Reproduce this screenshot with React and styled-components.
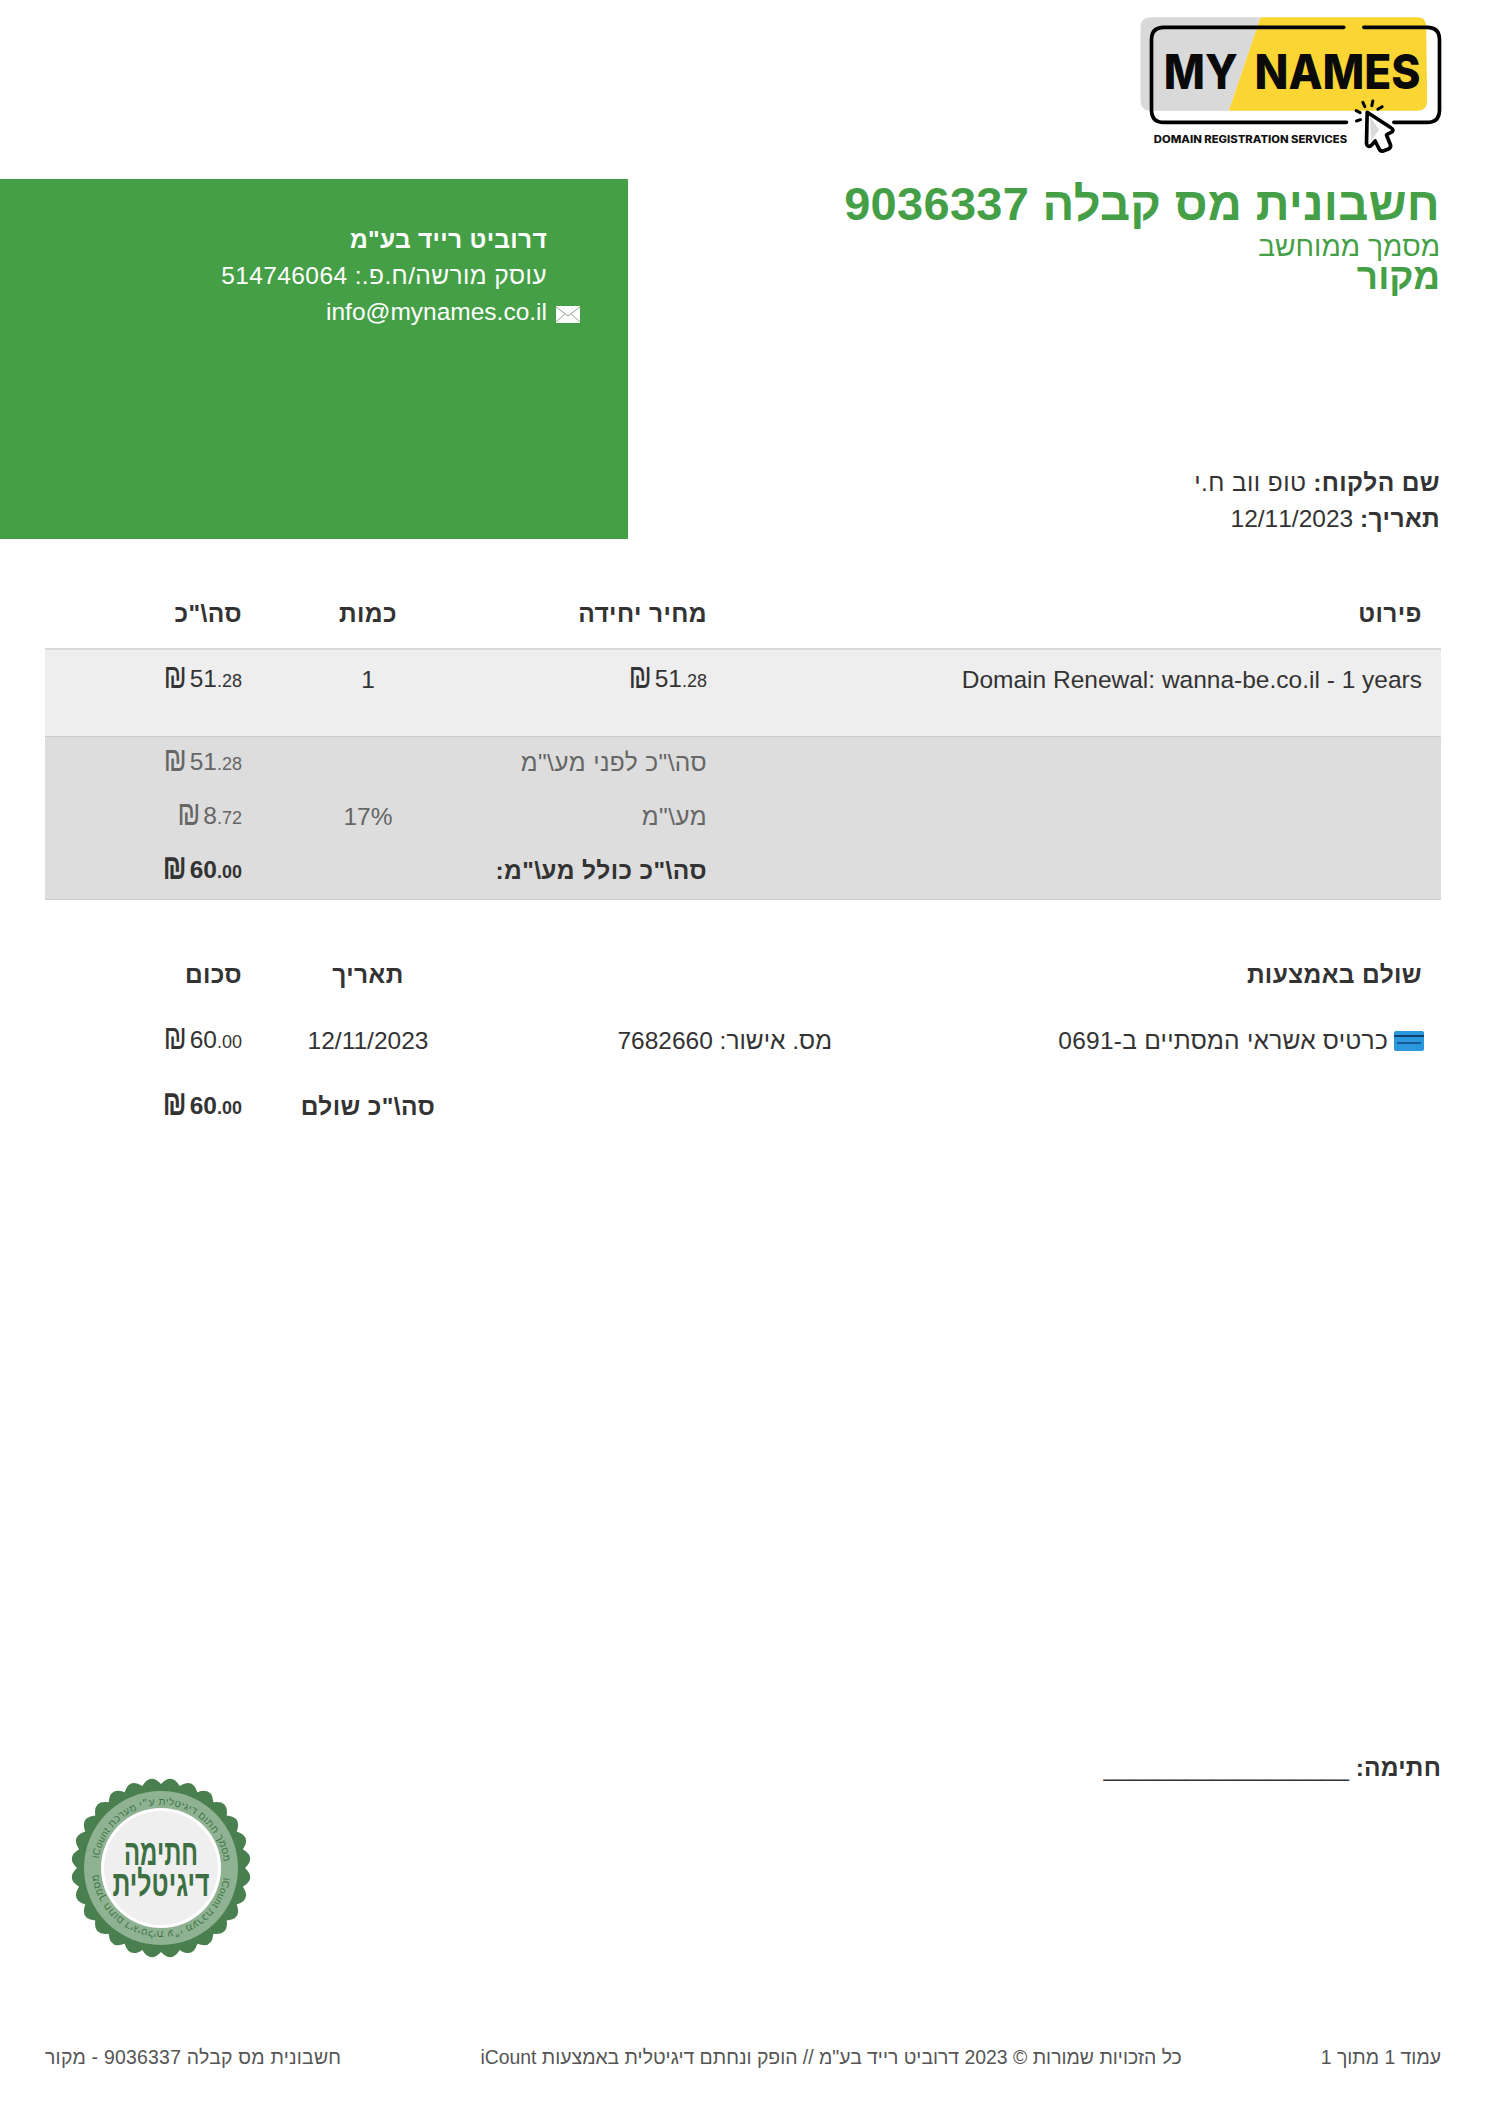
import React from "react";
import styled, { createGlobalStyle } from "styled-components";

const Global = createGlobalStyle`
  html, body { margin: 0; padding: 0; background: #fff; }
  body { font-family: "Liberation Sans", Arial, sans-serif; color: #333; }
`;

const Page = styled.div`
  direction: rtl;
  width: 1487px;
  height: 2105px;
  display: flex;
  flex-direction: column;
  overflow: hidden;
  font-size: 24.5px;
  line-height: 36px;
`;

const LogoRow = styled.header`
  height: 179px;
  padding: 14px 43px 0 0;
  box-sizing: border-box;
  display: flex;
`;

const InfoRow = styled.section`
  height: 360px;
  display: flex;
  justify-content: space-between;
`;

const DocInfo = styled.div`
  padding-right: 47px;
  display: flex;
  flex-direction: column;
`;

const Title = styled.h1`
  margin: 0;
  font-size: 47px;
  line-height: 50px;
  font-weight: 700;
  letter-spacing: 0.3px;
  color: #459f47;
`;

const Subtitle = styled.div`
  margin-top: 2px;
  font-size: 28.2px;
  line-height: 30px;
  color: #459f47;
`;

const Origin = styled.div`
  margin-top: -1px;
  font-size: 37px;
  line-height: 34px;
  font-weight: 700;
  color: #459f47;
`;

const ClientBlock = styled.div`
  margin-top: auto;
  margin-bottom: 2px;
`;

const ClientLine = styled.div`
  line-height: 36px;
  color: #333;
  b { font-weight: 700; letter-spacing: 0.4px; }
`;

const CompanyBox = styled.aside`
  width: 628px;
  height: 360px;
  box-sizing: border-box;
  background: #459f47;
  color: #fff;
  padding: 43px 81px 0 0;
`;

const CompanyLine = styled.div`
  line-height: 36px;
  font-weight: ${(p) => (p.$bold ? 700 : 400)};
  letter-spacing: ${(p) => (p.$bold ? "0.3px" : "0")};
`;

const MailLine = styled(CompanyLine)`
  display: flex;
  align-items: center;
  margin-right: -33px;
  gap: 9px;
  svg { margin-top: 4px; }
`;

const He = styled.span`
  letter-spacing: 0.4px;
`;

const Section = styled.section`
  margin: ${(p) => p.$top}px 46px 0 45px;
`;

const Row = styled.div`
  display: grid;
  grid-template-columns: ${(p) => p.$cols};
  height: ${(p) => p.$h}px;
  align-items: center;
  white-space: nowrap;
  font-weight: ${(p) => (p.$bold ? 700 : 400)};
  letter-spacing: ${(p) => (p.$bold ? "0.4px" : "0")};
  color: ${(p) => p.$color || "#333"};
`;

const Cell = styled.div`
  padding: 0 19px;
  text-align: ${(p) => (p.$center ? "center" : "right")};
`;

const BodyBand = styled.div`
  background: #eee;
  border-top: 2px solid #d9d9d9;
  border-bottom: 1px solid #c9c9c9;
  padding-top: 11px;
  height: 89px;
  box-sizing: border-box;
`;

const TotalsBand = styled.div`
  display: flow-root;
  background: #ddd;
  border-bottom: 1px solid #ccc;
  height: 163px;
  box-sizing: border-box;
  & > :first-child { margin-top: -1px; }
`;

const AmountWrap = styled.span`
  direction: ltr;
  display: inline-block;
  unicode-bidi: isolate;
  white-space: nowrap;
  letter-spacing: 0;
  small { font-size: 18px; }
`;

const Shekel = styled.span`
  display: inline-block;
  margin-right: 3px;
  font-size: 27px;
  line-height: 20px;
  transform: scaleY(1.3);
  transform-origin: 50% 72%;
`;

const Amount = ({ v, d }) => (
  <AmountWrap>
    <Shekel>₪</Shekel>
    {v}
    <small>.{d}</small>
  </AmountWrap>
);

const Method = styled.div`
  display: flex;
  align-items: center;
  gap: 6px;
  margin-right: -2px;
  letter-spacing: 0.25px;
`;

const SignArea = styled.section`
  margin-top: auto;
  padding: 0 46px 0 69px;
  display: flex;
  justify-content: space-between;
  align-items: flex-start;
`;

const SignLine = styled.div`
  margin-top: -26px;
  b { font-weight: 700; letter-spacing: 0.2px; }
`;

const Footer = styled.footer`
  margin-top: 79px;
  height: 66px;
  padding: 0 46px 0 45px;
  display: flex;
  justify-content: space-between;
  font-size: 19.4px;
  color: #555;
`;

const FooterDoc = styled.span`
  letter-spacing: 0.25px;
`;

const Logo = () => (
  <svg width="307" height="140" viewBox="110 45 920 420" aria-label="My Names">
    <path d="M150 55H480L385 335H150Q120 335 120 305V85Q120 55 150 55Z" fill="#d9d9d9" />
    <path d="M480 55H950Q975 55 977 80L980 305Q980 335 950 335H385Z" fill="#fbd534" />
    <g fill="none" stroke="#000" strokeWidth="11" strokeLinecap="round">
      <path d="M730 85H190Q153 85 153 122V332Q153 370 190 370H738" />
      <path d="M790 85H980Q1017 85 1017 122V332Q1017 370 980 370H880" />
    </g>
    <g fill="none" stroke="#000" strokeWidth="9" strokeLinecap="round">
      <path d="M767 335l12 6M787 310l6 13M817 306l-3 14M845 323l-13 8M768 366l12-4" />
    </g>
    <text x="190" y="270" fontFamily="Inter, Liberation Sans" fontWeight="800" fontSize="144" textLength="222" lengthAdjust="spacingAndGlyphs" direction="ltr" fill="#0a0a0a">MY</text>
    <text x="462" y="270" fontFamily="Inter, Liberation Sans" fontWeight="800" fontSize="144" textLength="498" lengthAdjust="spacingAndGlyphs" direction="ltr" fill="#0a0a0a">NAMES</text>
    <text x="160" y="432" fontFamily="Inter, Liberation Sans" fontWeight="800" fontSize="30" textLength="580" lengthAdjust="spacingAndGlyphs" direction="ltr" fill="#111">DOMAIN REGISTRATION SERVICES</text>
    <path d="M800 340L868 384Q884 394 872 400Q862 404 858 408L870 438Q872 446 864 450L848 456Q840 458 836 450L824 426L812 440Q800 446 798 434Z" fill="#fff" stroke="#000" strokeWidth="11" strokeLinejoin="round" />
    <path d="M808 352L812 425L826 405L836 392Z" fill="#d9d9d9" />
  </svg>
);

const Envelope = () => (
  <svg width="24" height="17" viewBox="0 0 24 17">
    <rect width="24" height="17" fill="#fff" />
    <path d="M0 1L12 10L24 1M0 16L9 8M24 16L15 8" fill="none" stroke="#8fa58f" strokeWidth="1" />
  </svg>
);

const Card = () => (
  <svg width="30" height="20" viewBox="0 0 30 20">
    <rect width="30" height="20" rx="2" fill="#2b97dc" />
    <rect y="4" width="30" height="2" fill="#12406e" />
    <rect x="3" y="11" width="24" height="2" fill="#145a96" />
  </svg>
);

const sealPoints = () => {
  const n = 28;
  const pts = [];
  const p = (a, r) => `${(92 + r * Math.sin(a)).toFixed(1)} ${(92 - r * Math.cos(a)).toFixed(1)}`;
  for (let i = 0; i < n; i++) {
    const a1 = (i / n) * Math.PI * 2;
    const a2 = ((i + 0.5) / n) * Math.PI * 2;
    const a3 = ((i + 1) / n) * Math.PI * 2;
    if (i === 0) pts.push(`M${p(a1, 84)}`);
    pts.push(`Q${p(a2, 96)} ${p(a3, 84)}`);
  }
  return pts.join("") + "Z";
};

const SealText = () => (
  <text fontFamily="Liberation Sans" fontSize="10" fill="#3f7546" direction="rtl" letterSpacing="0.3">
    <textPath href="#sealArc" startOffset="97%">מסמך חתום דיגיטלית ע״י מערכת iCount</textPath>
  </text>
);

const Seal = () => (
  <svg width="184" height="184" viewBox="0 0 184 184" aria-label="חתימה דיגיטלית">
    <defs>
      <path id="sealArc" d="M29 92a63 63 0 0 1 126 0" />
    </defs>
    <path d={sealPoints()} fill="#4a7f4f" />
    <circle cx="92" cy="92" r="77" fill="#8fb392" />
    <circle cx="92" cy="92" r="60" fill="#fff" />
    <circle cx="92" cy="92" r="57" fill="#efefef" />
    <SealText />
    <g transform="rotate(180 92 92)">
      <SealText />
    </g>
    <text x="92" y="89" textAnchor="middle" fontFamily="Liberation Sans" fontWeight="700" fontSize="36" fill="#3c6f42" direction="rtl" textLength="74" lengthAdjust="spacingAndGlyphs">חתימה</text>
    <text x="92" y="120" textAnchor="middle" fontFamily="Liberation Sans" fontWeight="700" fontSize="36" fill="#3c6f42" direction="rtl" textLength="97" lengthAdjust="spacingAndGlyphs">דיגיטלית</text>
  </svg>
);

const ITEM = "715px 251px 214px 216px";
const PAY = "590px 376px 214px 216px";

export default function App() {
  return (
    <Page>
      <Global />
      <LogoRow>
        <Logo />
      </LogoRow>
      <InfoRow>
        <DocInfo>
          <Title>חשבונית מס קבלה 9036337</Title>
          <Subtitle>מסמך ממוחשב</Subtitle>
          <Origin>מקור</Origin>
          <ClientBlock>
            <ClientLine><b>שם הלקוח:</b> <He>טופ ווב ח.י</He></ClientLine>
            <ClientLine><b>תאריך:</b> 12/11/2023</ClientLine>
          </ClientBlock>
        </DocInfo>
        <CompanyBox>
          <CompanyLine $bold>דרוביט רייד בע"מ</CompanyLine>
          <CompanyLine><He>עוסק מורשה/ח.פ.: 514746064</He></CompanyLine>
          <MailLine>
            <Envelope />
            <span dir="ltr">info@mynames.co.il</span>
          </MailLine>
        </CompanyBox>
      </InfoRow>

      <Section $top={40}>
        <Row $cols={ITEM} $h={69} $bold>
          <Cell>פירוט</Cell>
          <Cell>מחיר יחידה</Cell>
          <Cell $center>כמות</Cell>
          <Cell>סה\"כ</Cell>
        </Row>
        <BodyBand>
          <Row $cols={ITEM} $h={36}>
            <Cell><bdi>Domain Renewal: wanna-be.co.il - 1 years</bdi></Cell>
            <Cell><Amount v="51" d="28" /></Cell>
            <Cell $center>1</Cell>
            <Cell><Amount v="51" d="28" /></Cell>
          </Row>
        </BodyBand>
        <TotalsBand>
          <Row $cols={ITEM} $h={54} $color="#666">
            <Cell />
            <Cell><He>סה\"כ לפני מע\"מ</He></Cell>
            <Cell />
            <Cell><Amount v="51" d="28" /></Cell>
          </Row>
          <Row $cols={ITEM} $h={54} $color="#666">
            <Cell />
            <Cell><He>מע\"מ</He></Cell>
            <Cell $center>17%</Cell>
            <Cell><Amount v="8" d="72" /></Cell>
          </Row>
          <Row $cols={ITEM} $h={54} $bold>
            <Cell />
            <Cell>סה\"כ כולל מע\"מ:</Cell>
            <Cell />
            <Cell><Amount v="60" d="00" /></Cell>
          </Row>
        </TotalsBand>
      </Section>

      <Section $top={42}>
        <Row $cols={PAY} $h={66} $bold>
          <Cell>שולם באמצעות</Cell>
          <Cell />
          <Cell $center>תאריך</Cell>
          <Cell>סכום</Cell>
        </Row>
        <Row $cols={PAY} $h={66}>
          <Cell><Method><Card />כרטיס אשראי המסתיים ב-0691</Method></Cell>
          <Cell>מס. אישור: 7682660</Cell>
          <Cell $center>12/11/2023</Cell>
          <Cell><Amount v="60" d="00" /></Cell>
        </Row>
        <Row $cols={PAY} $h={66} $bold>
          <Cell />
          <Cell />
          <Cell $center>סה\"כ שולם</Cell>
          <Cell><Amount v="60" d="00" /></Cell>
        </Row>
      </Section>

      <SignArea>
        <SignLine><b>חתימה:</b> __________________</SignLine>
        <Seal />
      </SignArea>

      <Footer>
        <span>עמוד 1 מתוך 1</span>
        <span>כל הזכויות שמורות © 2023 דרוביט רייד בע"מ // הופק ונחתם דיגיטלית באמצעות iCount</span>
        <FooterDoc>חשבונית מס קבלה 9036337 - מקור</FooterDoc>
      </Footer>
    </Page>
  );
}
